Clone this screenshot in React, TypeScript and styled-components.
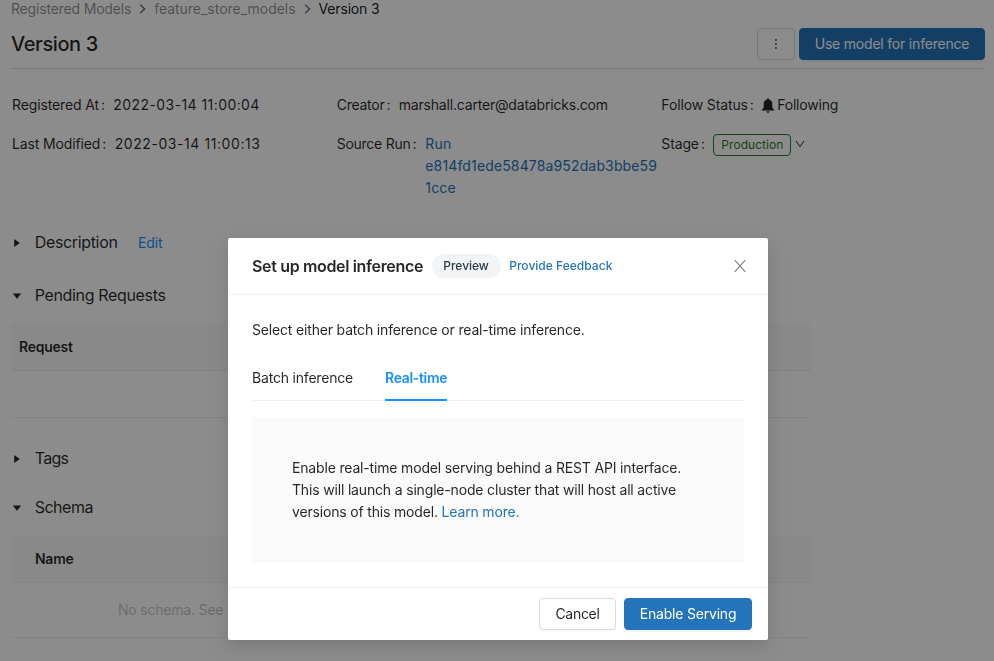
import React from "react";
import styled, { createGlobalStyle } from "styled-components";

const GlobalStyle = createGlobalStyle`
  *, *::before, *::after { box-sizing: border-box; }
  body {
    margin: 0;
    overflow: hidden;
    background: #fff;
    color: rgba(0, 0, 0, 0.85);
    font-family: "Inter", "Liberation Sans", sans-serif;
    font-size: 14px;
    line-height: 22px;
    letter-spacing: -0.17px;
  }
  h1, h2, p { margin: 0; }
  button { font: inherit; letter-spacing: inherit; }
`;

/* ---------- Page ---------- */

const Page = styled.main`
  width: 994px;
  height: 661px;
  padding: 0 9px 0 11px;
  overflow: hidden;
`;

const Breadcrumb = styled.nav`
  display: flex;
  align-items: center;
  height: 22px;
  margin-top: -2px;
  color: rgba(0, 0, 0, 0.45);
`;

const Crumb = styled.span<{ $current?: boolean; $tracking?: number }>`
  letter-spacing: ${(p) => p.$tracking ?? -0.18}px;
  color: ${(p) => (p.$current ? "rgba(0, 0, 0, 0.9)" : "inherit")};
`;

const CrumbChevron = styled.svg`
  width: 7px;
  height: 10px;
  margin: 0 8px;
  fill: none;
  stroke: rgba(0, 0, 0, 0.55);
  stroke-width: 1.5;
`;

const PageHeader = styled.header`
  display: flex;
  align-items: center;
  justify-content: space-between;
  height: 49px;
  padding-bottom: 1px;
  border-bottom: 1px solid #d9d9d9;
`;

const PageTitle = styled.h1`
  padding-top: 1px;
  font-size: 20px;
  font-weight: 550;
  line-height: 28px;
  letter-spacing: -0.4px;
`;

const ButtonGroup = styled.div<{ $gap: number }>`
  display: flex;
  gap: ${(p) => p.$gap}px;
`;

const Button = styled.button<{ $primary?: boolean; $width: number; $tracking?: number }>`
  display: flex;
  align-items: center;
  justify-content: center;
  width: ${(p) => p.$width}px;
  height: 32px;
  padding: 0;
  border: 1px solid ${(p) => (p.$primary ? "#2374bb" : "#d9d9d9")};
  border-radius: 4px;
  background: ${(p) => (p.$primary ? "#2374bb" : "#fff")};
  color: ${(p) => (p.$primary ? "#fff" : "rgba(0, 0, 0, 0.85)")};
  letter-spacing: ${(p) => p.$tracking ?? -0.2}px;
  box-shadow: 0 2px 0 rgba(0, 0, 0, ${(p) => (p.$primary ? 0.045 : 0.015)});
`;

const Details = styled.dl`
  display: grid;
  grid-template-columns: repeat(3, 324.67px);
  row-gap: 17px;
  margin: 25px 0 0;
  padding-left: 1px;
`;

const Detail = styled.div`
  display: flex;
  align-items: flex-start;
`;

const Term = styled.dt<{ $tracking?: number }>`
  flex: none;
  letter-spacing: ${(p) => p.$tracking ?? -0.13}px;
  &::after {
    content: ":";
    margin: 0 8.5px 0 2px;
  }
`;

const Value = styled.dd<{ $tracking?: number }>`
  display: flex;
  align-items: center;
  margin: 0;
  letter-spacing: ${(p) => p.$tracking ?? -0.165}px;
`;

const RunLink = styled.a`
  display: block;
  width: 233px;
  padding-left: 0.5px;
  color: #2374bb;
  letter-spacing: 0.14px;
  overflow-wrap: anywhere;
`;

const BellIcon = styled.svg`
  width: 14px;
  height: 15px;
  margin: 0 2.5px 0 -1.5px;
  fill: currentColor;
`;

const StageTag = styled.span`
  height: 22px;
  margin-top: 1px;
  padding: 0 7px;
  border: 1px solid #28802a;
  border-radius: 4px;
  color: #28802a;
  font-size: 12px;
  line-height: 20px;
  letter-spacing: 0.05px;
`;

const StageChevron = styled.svg`
  width: 10px;
  height: 8px;
  margin: -1px 0 0 4px;
  fill: none;
  stroke: currentColor;
`;

const Section = styled.section<{ $top: number }>`
  margin-top: ${(p) => p.$top}px;
`;

const SectionHeading = styled.div`
  display: flex;
  align-items: center;
  height: 24px;
`;

const SectionTitle = styled.h2<{ $tracking?: number }>`
  font-size: 16px;
  font-weight: 400;
  line-height: 24px;
  letter-spacing: ${(p) => p.$tracking ?? -0.34}px;
`;

const Caret = styled.svg`
  width: 12px;
  height: 10px;
  margin: 1px 11.7px 0 0;
  fill: currentColor;
`;

const EditLink = styled.a`
  margin: 1px 0 0 20.5px;
  color: #1890ff;
`;

const Table = styled.div`
  width: 800px;
  margin-top: 17px;
`;

const TableHead = styled.div<{ $indent: number }>`
  height: 47px;
  padding: 12px 0 0 ${(p) => p.$indent}px;
  border-bottom: 1px solid #f0f0f0;
  background: #fafafa;
  font-weight: 600;
  letter-spacing: -0.26px;
`;

const TableBody = styled.div<{ $height: number }>`
  height: ${(p) => p.$height}px;
  padding-top: 16px;
  padding-left: 107px;
  border-bottom: 1px solid #f0f0f0;
  color: rgba(0, 0, 0, 0.25);
  letter-spacing: -0.2px;
  white-space: nowrap;
`;

/* ---------- Modal ---------- */

const Mask = styled.div`
  position: fixed;
  inset: 0;
  padding-top: 238px;
  background: rgba(0, 0, 0, 0.45);
`;

const Modal = styled.div`
  display: flex;
  flex-direction: column;
  width: 540px;
  height: 402px;
  margin-left: 228px;
  border-radius: 2px;
  background: #fff;
  box-shadow: 0 3px 6px -4px rgba(0, 0, 0, 0.12), 0 6px 16px rgba(0, 0, 0, 0.08),
    0 9px 28px 8px rgba(0, 0, 0, 0.05);
`;

const ModalHeader = styled.header`
  display: flex;
  align-items: center;
  height: 57px;
  padding: 0 22px 0 24px;
  border-bottom: 1px solid #f0f0f0;
`;

const ModalTitle = styled.h2`
  font-size: 16px;
  font-weight: 600;
  line-height: 22px;
  letter-spacing: -0.34px;
`;

const PreviewPill = styled.span`
  width: 69px;
  height: 24px;
  margin-left: 8.5px;
  border-radius: 12px;
  background: #f3f4f6;
  color: #2b3a44;
  font-size: 12px;
  font-weight: 500;
  line-height: 24px;
  letter-spacing: -0.05px;
  text-align: center;
`;

const FeedbackLink = styled.a`
  margin-left: 8.7px;
  color: #2374bb;
  font-size: 12px;
  font-weight: 500;
  letter-spacing: 0.02px;
`;

const CloseIcon = styled.svg`
  width: 12px;
  height: 14px;
  margin-left: auto;
  fill: none;
  stroke: rgba(0, 0, 0, 0.5);
  stroke-width: 1.2;
`;

const ModalBody = styled.div`
  flex: 1;
  padding: 24px 24px 0;
`;

const Tabs = styled.div`
  display: flex;
  gap: 32px;
  height: 46px;
  margin-top: 14px;
  border-bottom: 1px solid #f0f0f0;
`;

const Tab = styled.span<{ $active?: boolean }>`
  height: 46px;
  padding-top: 12px;
  border-bottom: 2px solid ${(p) => (p.$active ? "#1890ff" : "transparent")};
  color: ${(p) => (p.$active ? "#1890ff" : "inherit")};
  font-weight: ${(p) => (p.$active ? 600 : 400)};
  letter-spacing: ${(p) => (p.$active ? -0.33 : -0.19)}px;
`;

const Notice = styled.p`
  height: 146px;
  margin-top: 16px;
  padding: 40px;
  background: #fafafa;
`;

const InlineLink = styled.a`
  color: #2374bb;
`;

const ModalFooter = styled.footer`
  display: flex;
  justify-content: flex-end;
  height: 53px;
  padding: 10px 16px 0;
  border-top: 1px solid #f0f0f0;
`;

/* ---------- Icons ---------- */

const Chevron = () => (
  <CrumbChevron viewBox="0 0 7 10">
    <path d="M1.2 0.8 L5.6 5 L1.2 9.2" />
  </CrumbChevron>
);

const Disclosure = ({ open }: { open?: boolean }) => (
  <Caret viewBox="0 0 12 10">
    <path d={open ? "M1.8 2.5 H10.2 L6 7.8 Z" : "M3.2 1 L8.8 5 L3.2 9 Z"} />
  </Caret>
);

export default function App() {
  return (
    <>
      <GlobalStyle />
      <Page>
        <Breadcrumb>
          <Crumb>Registered Models</Crumb>
          <Chevron />
          <Crumb $tracking={-0.02}>feature_store_models</Crumb>
          <Chevron />
          <Crumb $current>Version 3</Crumb>
        </Breadcrumb>
        <PageHeader>
          <PageTitle>Version 3</PageTitle>
          <ButtonGroup $gap={4}>
            <Button $width={38} aria-label="More actions">
              <svg width="4" height="12" viewBox="0 0 4 12" fill="currentColor">
                <rect x="1.2" y="1.2" width="1.5" height="1.5" />
                <rect x="1.2" y="5.2" width="1.5" height="1.5" />
                <rect x="1.2" y="9.2" width="1.5" height="1.5" />
              </svg>
            </Button>
            <Button $primary $width={186}>Use model for inference</Button>
          </ButtonGroup>
        </PageHeader>

        <Details>
          <Detail>
            <Term>Registered At</Term>
            <Value $tracking={0.42}>2022-03-14 11:00:04</Value>
          </Detail>
          <Detail>
            <Term $tracking={-0.25}>Creator</Term>
            <Value $tracking={-0.19}>marshall.carter@databricks.com</Value>
          </Detail>
          <Detail>
            <Term $tracking={-0.13}>Follow Status</Term>
            <Value $tracking={-0.2}>
              <BellIcon viewBox="0 0 14 14" preserveAspectRatio="none">
                <path d="M7 0.2c.55 0 .9.35.9.9v.3c2.1.35 3.4 2 3.4 4.1v3c0 .9.6 1.5 1.5 2.2.4.35.5.6.5 1H.7c0-.4.1-.65.5-1 .9-.7 1.5-1.3 1.5-2.2v-3c0-2.1 1.3-3.75 3.4-4.1v-.3c0-.55.35-.9.9-.9ZM5.4 12.3h3.2c-.2.9-.8 1.5-1.6 1.5s-1.4-.6-1.6-1.5Z" />
              </BellIcon>
              Following
            </Value>
          </Detail>
          <Detail>
            <Term>Last Modified</Term>
            <Value $tracking={0.57}>2022-03-14 11:00:13</Value>
          </Detail>
          <Detail>
            <Term $tracking={-0.25}>Source Run</Term>
            <Value>
              <RunLink>Run e814fd1ede58478a952dab3bbe591cce</RunLink>
            </Value>
          </Detail>
          <Detail>
            <Term>Stage</Term>
            <Value>
              <StageTag>Production</StageTag>
              <StageChevron viewBox="0 0 10 8">
                <path d="M1 1 L5 6.6 L9 1" />
              </StageChevron>
            </Value>
          </Detail>
        </Details>

        <Section $top={31}>
          <SectionHeading>
            <Disclosure />
            <SectionTitle>Description</SectionTitle>
            <EditLink>Edit</EditLink>
          </SectionHeading>
        </Section>
        <Section $top={29}>
          <SectionHeading>
            <Disclosure open />
            <SectionTitle>Pending Requests</SectionTitle>
          </SectionHeading>
          <Table>
            <TableHead $indent={8}>Request</TableHead>
            <TableBody $height={47} />
          </Table>
        </Section>
        <Section $top={28}>
          <SectionHeading>
            <Disclosure />
            <SectionTitle $tracking={-0.7}>Tags</SectionTitle>
          </SectionHeading>
        </Section>
        <Section $top={25}>
          <SectionHeading>
            <Disclosure open />
            <SectionTitle $tracking={-0.5}>Schema</SectionTitle>
          </SectionHeading>
          <Table>
            <TableHead $indent={24}>Name</TableHead>
            <TableBody $height={55}>No schema. See</TableBody>
          </Table>
        </Section>
      </Page>

      <Mask>
        <Modal role="dialog">
          <ModalHeader>
            <ModalTitle>Set up model inference</ModalTitle>
            <PreviewPill>Preview</PreviewPill>
            <FeedbackLink>Provide Feedback</FeedbackLink>
            <CloseIcon viewBox="0 0 12 14">
              <path d="M0.8 1.2 L11.2 12.8 M11.2 1.2 L0.8 12.8" />
            </CloseIcon>
          </ModalHeader>
          <ModalBody>
            <p>Select either batch inference or real-time inference.</p>
            <Tabs>
              <Tab>Batch inference</Tab>
              <Tab $active>Real-time</Tab>
            </Tabs>
            <Notice>
              Enable real-time model serving behind a REST API interface.
              <br />
              This will launch a single-node cluster that will host all active
              <br />
              versions of this model. <InlineLink>Learn more.</InlineLink>
            </Notice>
          </ModalBody>
          <ModalFooter>
            <ButtonGroup $gap={8}>
              <Button $width={77} $tracking={-0.28}>Cancel</Button>
              <Button $primary $width={128}>Enable Serving</Button>
            </ButtonGroup>
          </ModalFooter>
        </Modal>
      </Mask>
    </>
  );
}
